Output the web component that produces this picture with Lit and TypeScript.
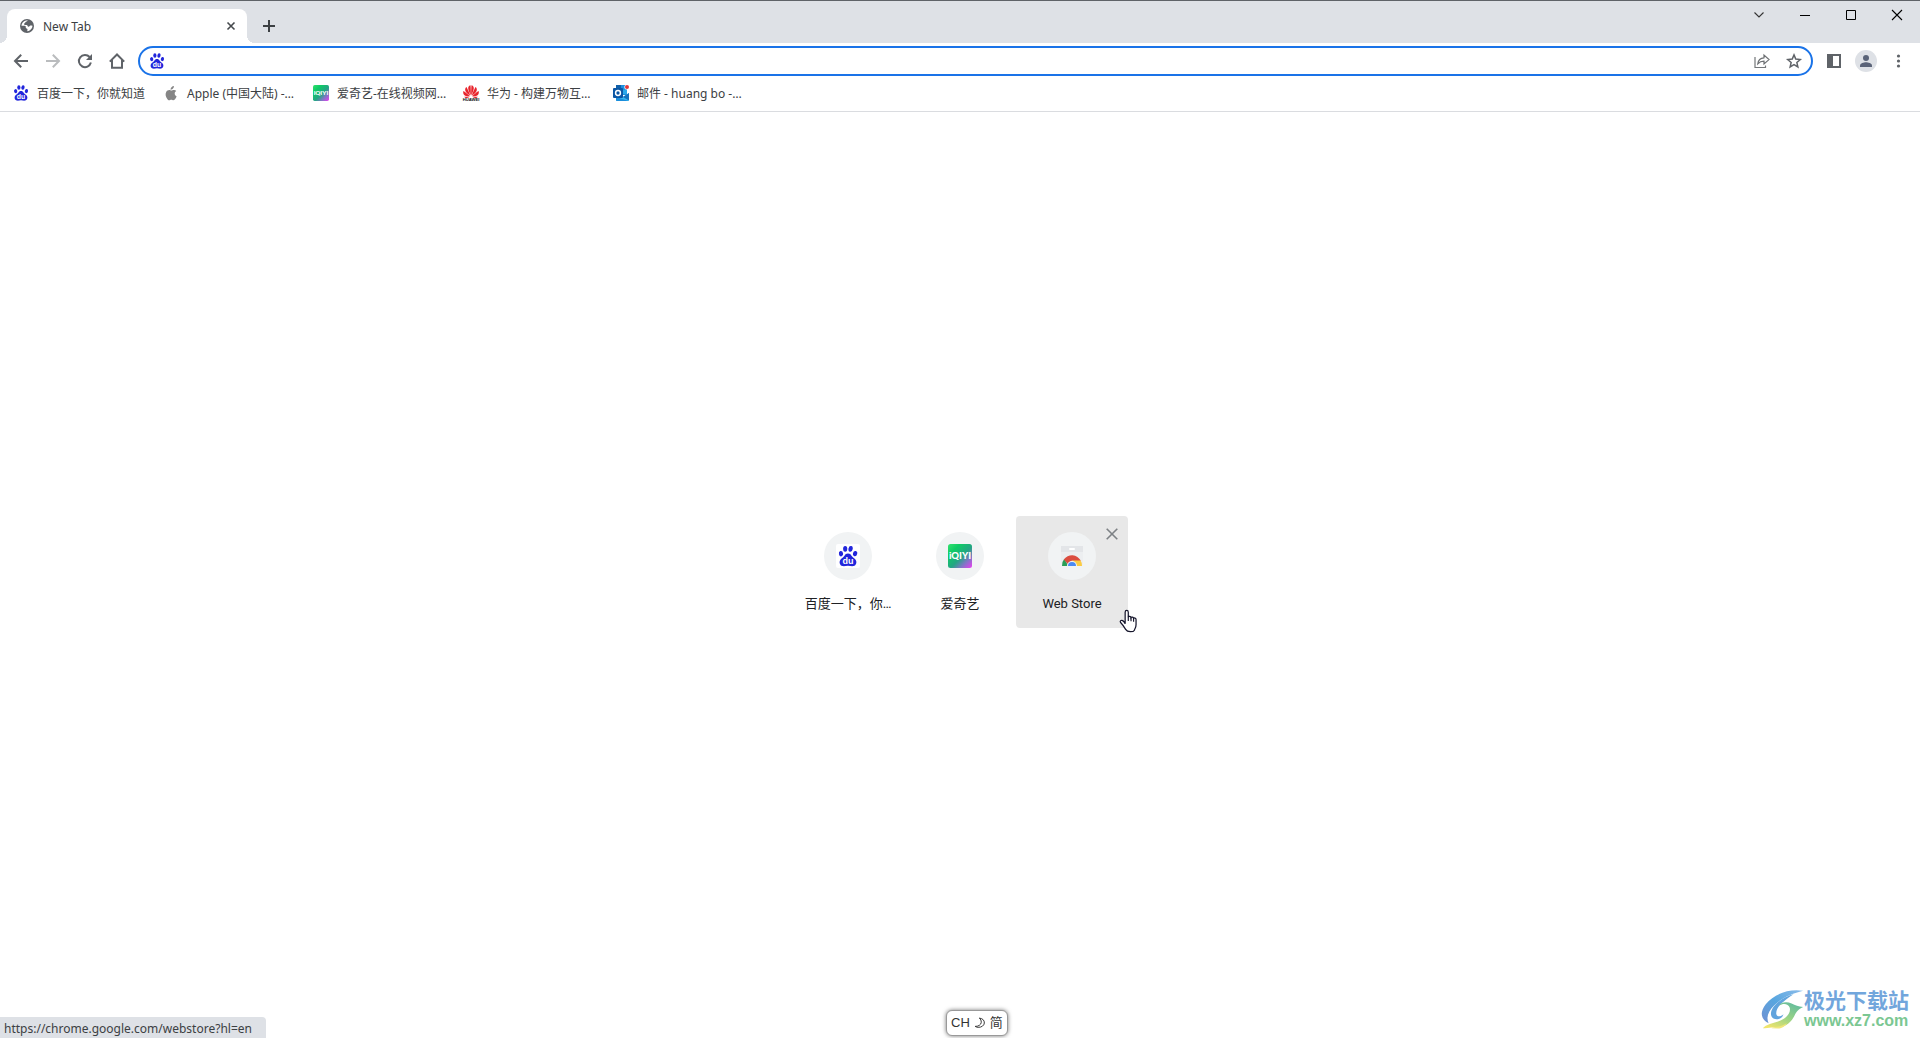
import { LitElement, html, css, svg, type TemplateResult } from "lit";
import { customElement, property } from "lit/decorators.js";

const baidu = svg`
  <g fill="#2226dc">
    <ellipse cx="2.7" cy="8.1" rx="2.1" ry="2.7" transform="rotate(-12 2.7 8.1)"/>
    <ellipse cx="6.900" cy="3.200" rx="2.100" ry="2.900"/>
    <ellipse cx="12.300" cy="3.300" rx="2.100" ry="2.900" transform="rotate(12 12.3 3.3)"/>
    <ellipse cx="16.800" cy="8" rx="2.100" ry="2.700" transform="rotate(14 16.8 8)"/>
    <path d="M9.700 8c1.700 0 2.700.9 3.500 2.100 1 1.500 2.700 2.300 3.900 3.800 1.900 2.300.9 6-1.900 6.600-1.800.4-3.500-.4-5.500-.4s-3.700.8-5.500.4c-2.800-.6-3.800-4.300-1.900-6.600 1.200-1.500 2.900-2.300 3.900-3.800C7 8.900 8 8 9.700 8z"/>
  </g>
  <text x="9.700" y="18.300" font-family="Liberation Sans, sans-serif" font-size="9" font-weight="700" fill="#fff" text-anchor="middle">du</text>`;

const iqiyi = svg`
  <defs>
    <linearGradient id="q" x1="0" y1="0" x2="1" y2="1">
      <stop offset="0" stop-color="#35e26f"/><stop offset=".25" stop-color="#0fcb65"/>
      <stop offset=".55" stop-color="#23a583"/><stop offset=".75" stop-color="#7d78c4"/>
      <stop offset="1" stop-color="#ee3cf5"/>
    </linearGradient>
  </defs>
  <rect width="24" height="24" rx="2.500" fill="url(#q)"/>
  <text x="12" y="15.300" font-family="Lato, sans-serif" font-size="9.500" font-weight="900" fill="#fff" text-anchor="middle">iQIYI</text>`;

const icons: Record<string, [string, TemplateResult | ReturnType<typeof svg>]> = {
  globe: ["0 0 16 16", svg`<circle cx="8" cy="8" r="7" fill="#5f6368"/>
    <path fill="#fff" d="M8.700 2.300c-.2.900-.9 1.200-1.800 1.500-.7.300-.5 1.200-1.300 1.500-.8.200-.6 1-.2 1.400.6.500 1.700-.1 2.500.4.800.4.500 1.300 1.300 1.600.6.200 1.100-.4 1.500-.8.700-.6 1.600-.4 2.800-.1-.1 1.900-1.200 3.700-2.900 4.700-.7.300-1.500.600-2.300.7-.1-.9.500-1.500.1-2.200-.4-.6-1.200-.500-1.500-1.100-.3-.7.100-1.300-.3-1.700C5.400 7.200 3.800 7.900 2.500 7.700 2.700 5 5 2.500 8.700 2.300z"/>`],
  tabClose: ["0 0 16 16", svg`<path d="M4.500 4.500l7 7m0-7l-7 7" fill="none" stroke="#45494d" stroke-width="1.600"/>`],
  plus: ["0 0 16 16", svg`<path d="M8 2v12M2 8h12" fill="none" stroke="#3c4043" stroke-width="2"/>`],
  back: ["0 0 16 16", svg`<path d="M15 8H2.500M8.200 1.800L2 8l6.200 6.200" fill="none" stroke="#5f6368" stroke-width="2"/>`],
  forward: ["0 0 16 16", svg`<path d="M1 8h12.500M7.800 1.800L14 8l-6.200 6.200" fill="none" stroke="#babcbe" stroke-width="2"/>`],
  reload: ["0 0 16 16", svg`<path d="M13.900 9.600A6.100 6.100 0 1 1 12.600 4" fill="none" stroke="#5f6368" stroke-width="2"/><path d="M15 1v6H9z" fill="#5f6368"/>`],
  home: ["0 0 16 16", svg`<path d="M.8 8.600L8 1.500l7.200 7.100M3 7v7.800h10V7" fill="none" stroke="#5f6368" stroke-width="2"/>`],
  share: ["0 0 16 16", svg`<path d="M1 4v10.500h10.500v-2" fill="none" stroke="#74777a" stroke-width="1.200"/>
    <path d="M3.800 10.800C4.200 7.200 6.500 5 10 4.800V2.100l5 4.500-5 4.400V8.200c-2.600 0-4.500.8-6.200 2.600z" fill="none" stroke="#6d7073" stroke-width="1.200"/>`],
  star: ["0 0 16 16", svg`<path d="M8 1.900l1.750 4.200 4.500.4-3.400 3 1 4.400L8 11.600l-3.850 2.300 1-4.400-3.400-3 4.500-.4z" fill="none" stroke="#5f6368" stroke-width="1.500"/>`],
  panel: ["0 0 16 16", svg`<path d="M1 1h14v14H1zM7 3v10h6V3z" fill="#5f6368" fill-rule="evenodd"/>`],
  person: ["0 0 22 22", svg`<circle cx="11" cy="11" r="11" fill="#dee1e6"/><circle cx="11" cy="8" r="3" fill="#5a6378"/><path d="M5 17v-1.500c0-2.200 4-3.300 6-3.300s6 1.100 6 3.300V17z" fill="#5a6378"/>`],
  dots: ["0 0 16 16", svg`<g fill="#5f6368"><circle cx="8.500" cy="3" r="1.600"/><circle cx="8.500" cy="8" r="1.600"/><circle cx="8.500" cy="13" r="1.600"/></g>`],
  chevron: ["0 0 12 12", svg`<path d="M1.500 3.500L6 8l4.500-4.500" fill="none" stroke="#333" stroke-width="1.100"/>`],
  minimize: ["0 0 12 12", svg`<path d="M1 6.500h10" stroke="#000"/>`],
  maximize: ["0 0 12 12", svg`<path d="M1.500 1.500h9v9h-9z" fill="none" stroke="#000"/>`],
  close: ["0 0 12 12", svg`<path d="M1 1l10 10M11 1L1 11" fill="none" stroke="#000" stroke-width="1.100"/>`],
  remove: ["0 0 12 12", svg`<path d="M.7.700l10.600 10.600M11.300.7L.7 11.300" fill="none" stroke="#7d8185" stroke-width="1.600"/>`],
  baidu: ["-.8 0 21 21", baidu],
  baiduTile: ["0 0 24 24", svg`<rect width="24" height="24" rx="2" fill="#fff"/><g transform="translate(2.300 1.600)">${baidu}</g>`],
  iqiyi: ["0 0 24 24", iqiyi],
  apple: ["0 0 16 16", svg`<path fill="#858585" d="M10.900 1c.1 1-.3 1.900-.9 2.600-.6.700-1.500 1.200-2.400 1.100-.1-1 .4-1.900.9-2.500C9.100 1.500 10.100 1.100 10.900 1zM13.300 5.900c-1 .6-1.600 1.400-1.600 2.600 0 1.300.7 2.300 1.900 2.800-.3 1-.8 1.900-1.400 2.700-.5.700-1 1.200-1.800 1.200s-1.100-.5-2.100-.5-1.300.5-2.100.5-1.400-.6-1.900-1.300C2.700 11.900 2 9 3.200 6.900c.7-1.200 1.900-1.900 3-1.900.9 0 1.700.6 2.200.6.600 0 1.600-.7 2.700-.6.800 0 1.600.3 2.200.9z"/>`],
  huawei: ["0 0 16 16", svg`<g fill="#e8242c">
    <path d="M7.700 10.500C6.500 7.800 5.200 5 5.200 3.200 5.200 1.600 6.300.600 7.500.3c.3 2.700.4 7.200.2 10.200z"/>
    <path d="M8.300 10.500C9.500 7.800 10.800 5 10.800 3.200 10.800 1.600 9.700.600 8.500.3c-.3 2.700-.4 7.200-.2 10.200z"/>
    <path d="M7.200 10.800C5 9.400 2.500 7.300 2.200 5.300c-.2-1.400.4-2.500 1.300-3.200 1.200 2.400 3 6 3.700 8.700z"/>
    <path d="M8.800 10.800c2.200-1.400 4.700-3.500 5-5.500.2-1.400-.4-2.500-1.300-3.200-1.200 2.400-3 6-3.700 8.700z"/>
    <path d="M6.800 11.200c-2.500.2-4.700-.2-5.800-1.500C.2 8.700 0 7.300.3 5.900 2.500 7.200 5.300 9.300 6.800 11.200z"/>
    <path d="M9.200 11.200c2.500.2 4.700-.2 5.800-1.500.8-1 1-2.400.7-3.800-2.200 1.300-5 3.400-6.500 5.300z"/>
    <path d="M6.600 11.700H1.200c.7 1.100 1.700 1.400 2.800 1.200 1-.2 2-.7 2.600-1.200zM9.400 11.700h5.400c-.7 1.100-1.700 1.400-2.800 1.200-1-.2-2-.7-2.600-1.200z"/></g>
    <text x="8" y="16.300" font-family="Liberation Sans, sans-serif" font-size="4.200" font-weight="700" fill="#111" text-anchor="middle">HUAWEI</text>`],
  outlook: ["0 0 16 16", svg`<path d="M3 0h6v8H3z" fill="#0f5fa8"/><path d="M8 0h6v10H8z" fill="#1c8fdd"/><path d="M8 5h6v4H8z" fill="#28a8ea"/>
    <path d="M3 8l6.500 4L16 8v7a1 1 0 0 1-1 1H4a1 1 0 0 1-1-1z" fill="#35b8f1"/><path d="M16 8v7.500L10 12z" fill="#1272be"/><path d="M3 12l12.500 4H4a1 1 0 0 1-1-1z" fill="#1a8ddb"/>
    <rect y="3" width="10" height="10" rx="1" fill="#0a56a4"/><circle cx="5" cy="8" r="2.400" fill="none" stroke="#fff" stroke-width="1.500"/>
    <circle cx="14" cy="2" r="2.600" fill="#fff"/><circle cx="14" cy="2" r="2" fill="#e0383b"/>`],
  store: ["0 0 24 24", svg`<path d="M1 2h22v18a2 2 0 0 1-2 2H3a2 2 0 0 1-2-2z" fill="#eceef0"/><path d="M1 2h22v6H1z" fill="#e3e5e8"/><rect x="9" y="4" width="6" height="2" rx="1" fill="#fff"/>
    <path d="M2 22a10 10 0 0 1 2.300-7.300L8.400 22z" fill="#2a9d57"/><path d="M22 22a10 10 0 0 0-1.700-6H12l3.500 6z" fill="#fbcb43"/>
    <path d="M3.800 15.600A10 10 0 0 1 20.800 16.600H12L7.800 20z" fill="#db4c3f"/><path d="M7 22a5 5 0 0 1 10 0z" fill="#f1f3f4"/><path d="M8 22a4 4 0 0 1 8 0z" fill="#4a8af4"/>`],
  moon: ["0 0 16 16", svg`<path d="M7 1.500c4.500.3 7 3 6.800 6.500-.3 3.500-4 6-8.300 5.800-1.600-.1-3-.6-4-1.300C5.500 12.800 9.500 10.500 9.700 7 9.800 4.800 8.800 2.800 7 1.500z" fill="none" stroke="#333" stroke-width="1.300"/>`],
  hand: ["0 0 19 25", svg`<path d="M6.500 15.500V3.200c0-2.600 3.300-2.600 3.300 0v5.300c.3-1.300 2.700-1.200 2.900.4.500-1 2.500-.7 2.700.8.600-.7 2.600-.4 2.600 1.300v5.200c0 3.500-1.400 4.200-1.700 6-.6 1.200-1.800 1.600-4.300 1.600-2.900 0-4-.7-5-2.400-1.500-2.500-3-5-5.300-7.300-1.200-1.600.6-3 2.200-2 .8.500 1.800 1.700 2.600 3.400z" fill="#fff" stroke="#15152b" stroke-width="1.300"/><path d="M9.800 8v4.500M12.700 8.800v4M15.400 9.700v3.600" stroke="#15152b" stroke-width="1.200"/>`],
  swoosh: ["0 0 46 42", svg`
    <defs>
      <linearGradient id="b" x1="1" y1="0" x2="0" y2="1"><stop offset="0" stop-color="#8bbcea"/><stop offset=".5" stop-color="#58a6df"/><stop offset="1" stop-color="#7190d2"/></linearGradient>
      <linearGradient id="g" x1=".9" y1="0" x2=".2" y2="1"><stop offset="0" stop-color="#5cb9a0"/><stop offset=".55" stop-color="#9bd485"/><stop offset="1" stop-color="#f1e46c"/></linearGradient>
    </defs>
    <path d="M45 2C31-.5 15 5 6 16c-6 8-6 15 3 20-3-7 0-13 6-19C23 9 34 5 45 2z" fill="url(#b)"/>
    <path d="M35 5.500C25 8 13 16 11.500 25c-.6 5 3.500 7.500 8 6.500 3-.7 4.500-3 5-5-3 3-7 3-7.500-.5C16.500 19 24 13 35 5.500z" fill="#62a4dd"/>
    <path d="M20 17.500c4.500-3 9.500-2 11 2 1.700 5-3 11-9.500 13.500C14 36 6 37 3 41c5 .5 9-1 13-.5C27 41 33 34 36 28c2.500-5 5-7 9-9-5-.7-8-2-12-3.800-5-2-11-1.500-13 2.300z" fill="url(#g)"/>
    <path d="M12 41c5-2 11-1 16-5-2 4-6 5.500-9 5.500z" fill="#f0e77c"/>`],
};

@customElement("ui-icon")
export class UiIcon extends LitElement {
  @property() name = "";
  static styles = css`
    :host { display: block; width: 16px; height: 16px; flex: none; }
    .glyph { display: block; width: 100%; height: 100%; overflow: visible; }
  `;
  render() {
    const [box, body] = icons[this.name];
    return html`<svg class="glyph" viewBox=${box} aria-hidden="true">${body}</svg>`;
  }
}

const bookmarks = [
  { icon: "baidu", label: "百度一下，你就知道" },
  { icon: "apple", label: "Apple (中国大陆) -…" },
  { icon: "iqiyi", label: "爱奇艺-在线视频网…" },
  { icon: "huawei", label: "华为 - 构建万物互…" },
  { icon: "outlook", label: "邮件 - huang bo -…" },
];

const shortcuts = [
  { icon: "baiduTile", label: "百度一下，你…", active: false },
  { icon: "iqiyi", label: "爱奇艺", active: false },
  { icon: "store", label: "Web Store", active: true },
];

@customElement("app-root")
export class AppRoot extends LitElement {
  static styles = css`
    :host {
      display: flex; flex-direction: column; position: relative;
      min-height: 100vh; box-sizing: border-box; overflow: hidden;
      background: #fff; color: #3c4043;
      font: 12px/16px "Noto Sans", "Noto Sans CJK SC", sans-serif;
    }
    * { box-sizing: border-box; }
    button {
      display: flex; align-items: center; justify-content: center;
      padding: 0; border: 0; background: none; color: inherit; font: inherit;
    }
    a { color: inherit; text-decoration: none; }

    .strip { display: flex; height: 43px; padding-left: 7px; background: #dee1e6; border-top: 1px solid #5f6368; }
    .tab {
      position: relative; display: flex; align-items: center; gap: 8px;
      width: 240px; height: 34px; margin-top: 8px; padding: 0 8px 0 12px;
      background: #fff; border-radius: 8px 8px 0 0;
    }
    .tab::before, .tab::after { content: ""; position: absolute; bottom: 0; width: 8px; height: 8px; }
    .tab::before { right: 100%; background: radial-gradient(circle at 0 0, transparent 8px, #fff 8px); }
    .tab::after { left: 100%; background: radial-gradient(circle at 100% 0, transparent 8px, #fff 8px); }
    .tab-title { flex: 1; padding-top: 1px; }
    .new-tab { width: 28px; height: 28px; margin: 11px 0 0 8px; }
    .window { display: flex; margin-left: auto; }
    .window button { width: 46px; height: 28px; }
    .window ui-icon { width: 12px; height: 12px; }

    .toolbar { display: flex; align-items: center; gap: 4px; height: 35px; padding: 1px 8px 0 7px; }
    .tool { width: 28px; height: 28px; }
    .avatar { width: 22px; height: 22px; }
    .omnibox {
      flex: 1; display: flex; align-items: center; gap: 4px;
      height: 30px; margin: 0 3px; padding: 0 3px 0 9px;
      border: 2px solid #1a73e8; border-radius: 15px;
    }
    .address { flex: 1; min-width: 0; border: 0; outline: 0; padding: 0 4px; background: none; font: inherit; font-size: 14px; }

    .bookmarks {
      display: flex; align-items: center; gap: 16px;
      height: 34px; padding: 0 13px 3px; border-bottom: 1px solid #dadce0;
    }
    .bookmark { display: flex; align-items: center; gap: 8px; white-space: nowrap; }
    .bookmark-label { min-width: 110px; padding-top: 1px; }

    .content { flex: 1; display: flex; align-items: center; justify-content: center; padding-bottom: 6px; }
    .tiles { position: relative; display: flex; }
    .tile {
      position: relative; width: 112px; height: 112px; border-radius: 4px; color: #202124;
      font: 13px/18px Roboto, "Noto Sans CJK SC", sans-serif;
    }
    .tile.active { background: #e8e8e8; }
    .shortcut { display: flex; flex-direction: column; align-items: center; gap: 15px; height: 100%; padding-top: 16px; white-space: nowrap; }
    .disc { display: grid; place-items: center; width: 48px; height: 48px; border-radius: 50%; background: #f1f3f4; }
    .disc ui-icon { width: 24px; height: 24px; }
    .remove { position: absolute; top: 8px; right: 6px; width: 20px; height: 20px; }
    .remove ui-icon { width: 12px; height: 12px; }
    .pointer { position: absolute; top: 93px; right: -9px; width: 18px; height: 24px; }

    .status {
      position: absolute; left: 0; bottom: 0; height: 21px; padding: 4px 14px 0 4px;
      background: #dee1e6; border-top-right-radius: 4px;
    }
    .ime {
      position: absolute; left: 50%; bottom: 2px; margin-left: -14px; height: 26px; padding: 0 4px;
      display: flex; align-items: center; gap: 4px; background: #fff; color: #333;
      border: 1px solid #999; border-radius: 6px; box-shadow: 0 0 4px #777;
      font: 13px/20px "Liberation Sans", "Noto Sans CJK SC", sans-serif;
    }
    .ime ui-icon { width: 12px; height: 12px; }
    .brand { position: absolute; right: 11px; bottom: 7px; display: flex; align-items: center; }
    .brand-mark { width: 44px; height: 42px; }
    .brand-text { display: flex; flex-direction: column; }
    .brand-name { color: #72a6dc; font: 700 21px/24px "Noto Sans CJK SC", sans-serif; }
    .brand-site { color: #7bc792; font: 700 16px/20px "Liberation Sans", sans-serif; }
  `;

  private tool(icon: string, label: string, cls = "") {
    return html`<button class="tool" aria-label=${label}><ui-icon class=${cls} name=${icon}></ui-icon></button>`;
  }

  render() {
    return html`
      <header>
        <div class="strip">
          <div class="tab">
            <ui-icon name="globe"></ui-icon>
            <span class="tab-title">New Tab</span>
            <button aria-label="Close tab"><ui-icon name="tabClose"></ui-icon></button>
          </div>
          <button class="new-tab" aria-label="New tab"><ui-icon name="plus"></ui-icon></button>
          <div class="window">
            <button aria-label="Search tabs"><ui-icon name="chevron"></ui-icon></button>
            <button aria-label="Minimize"><ui-icon name="minimize"></ui-icon></button>
            <button aria-label="Maximize"><ui-icon name="maximize"></ui-icon></button>
            <button aria-label="Close"><ui-icon name="close"></ui-icon></button>
          </div>
        </div>
        <div class="toolbar">
          ${this.tool("back", "Back")}${this.tool("forward", "Forward")}
          ${this.tool("reload", "Reload")}${this.tool("home", "Home")}
          <div class="omnibox">
            <ui-icon name="baidu"></ui-icon>
            <input class="address" type="text" aria-label="Address and search bar" />
            ${this.tool("share", "Share")}${this.tool("star", "Bookmark")}
          </div>
          ${this.tool("panel", "Side panel")}${this.tool("person", "Profile", "avatar")}${this.tool("dots", "Menu")}
        </div>
        <nav class="bookmarks" aria-label="Bookmarks">
          ${bookmarks.map((b) => html`<a class="bookmark" href="#"><ui-icon name=${b.icon}></ui-icon><span class="bookmark-label">${b.label}</span></a>`)}
        </nav>
      </header>
      <main class="content">
        <div class="tiles">
          ${shortcuts.map((s) => html`
            <div class="tile ${s.active ? "active" : ""}">
              <a class="shortcut" href="#"><span class="disc"><ui-icon name=${s.icon}></ui-icon></span><span>${s.label}</span></a>
              ${s.active ? html`<button class="remove" aria-label="Remove"><ui-icon name="remove"></ui-icon></button>` : ""}
            </div>`)}
          <ui-icon class="pointer" name="hand"></ui-icon>
        </div>
      </main>
      <div class="status">https://chrome.google.com/webstore?hl=en</div>
      <div class="ime"><span>CH</span><ui-icon name="moon"></ui-icon><span>简</span></div>
      <div class="brand">
        <ui-icon class="brand-mark" name="swoosh"></ui-icon>
        <div class="brand-text"><span class="brand-name">极光下载站</span><span class="brand-site">www.xz7.com</span></div>
      </div>
    `;
  }
}
